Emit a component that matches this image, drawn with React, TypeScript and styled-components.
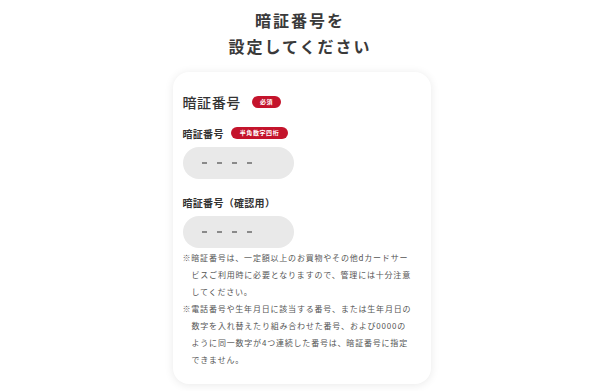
import React from "react";
import styled, { createGlobalStyle } from "styled-components";

const GlobalStyle = createGlobalStyle`
  html, body {
    margin: 0;
    padding: 0;
    background: #ffffff;
  }
  body {
    font-family: "Noto Sans CJK JP", "Noto Sans", sans-serif;
    color: #333333;
  }
`;

const Page = styled.div`
  width: 600px;
  height: 391px;
  overflow: hidden;
  display: flex;
  flex-direction: column;
  align-items: center;
  padding-top: 7px;
  box-sizing: border-box;
`;

const PageTitle = styled.h1`
  margin: 0 0 13px;
  font-size: 16px;
  line-height: 26px;
  font-weight: 700;
  letter-spacing: 2px;
  text-align: center;
  color: #3a3a3a;
`;

const Card = styled.section`
  width: 258px;
  margin-left: 3px;
  box-sizing: border-box;
  padding: 20px 14px 16px 10px;
  background: #ffffff;
  border-radius: 16px;
  box-shadow: 0 1px 10px rgba(0, 0, 0, 0.09);
`;

const HeadingRow = styled.div`
  display: flex;
  align-items: center;
  gap: 11px;
  height: 20px;
`;

const Heading = styled.h2`
  margin: 0;
  font-size: 14px;
  font-weight: 500;
  letter-spacing: 0.6px;
  color: #333333;
`;

const Badge = styled.span<{ $pad?: number }>`
  display: inline-flex;
  align-items: center;
  justify-content: center;
  height: 12px;
  padding: 0 ${(p) => p.$pad ?? 8}px;
  border-radius: 6px;
  background: #c4142c;
  color: #ffffff;
  font-size: 6px;
  font-weight: 700;
  letter-spacing: 0.6px;
  line-height: 1;
`;

const FieldLabelRow = styled.div<{ $top: number }>`
  display: flex;
  align-items: center;
  gap: 7px;
  height: 14px;
  margin-top: ${(p) => p.$top}px;
`;

const FieldLabel = styled.label`
  font-size: 10px;
  font-weight: 700;
  letter-spacing: 0.3px;
  color: #333333;
`;

const PinBox = styled.div`
  display: flex;
  align-items: center;
  gap: 10px;
  width: 111px;
  height: 32px;
  margin-top: 7px;
  padding-left: 19px;
  box-sizing: border-box;
  border-radius: 16px;
  background: #e9e9e9;
`;

const Dash = styled.span`
  width: 5px;
  height: 1.5px;
  background: #8a8a8a;
`;

const Notes = styled.div`
  margin-top: 1px;
`;

const Note = styled.p`
  margin: 0;
  padding-left: 9px;
  text-indent: -9px;
  font-size: 8px;
  line-height: 17px;
  letter-spacing: 0.8px;
  color: #555555;
`;

const PinInput = ({ label, badge, top }: { label: string; badge?: string; top: number }) => (
  <>
    <FieldLabelRow $top={top}>
      <FieldLabel>{label}</FieldLabel>
      {badge ? <Badge $pad={9}>{badge}</Badge> : null}
    </FieldLabelRow>
    <PinBox>
      {[0, 1, 2, 3].map((i) => (
        <Dash key={i} />
      ))}
    </PinBox>
  </>
);

export default function App() {
  return (
    <Page>
      <GlobalStyle />
      <PageTitle>
        暗証番号を
        <br />
        設定してください
      </PageTitle>
      <Card>
        <HeadingRow>
          <Heading>暗証番号</Heading>
          <Badge $pad={8}>必須</Badge>
        </HeadingRow>
        <PinInput label="暗証番号" badge="半角数字四桁" top={14} />
        <PinInput label="暗証番号（確認用）" top={16} />
        <Notes>
          <Note>
            ※暗証番号は、一定額以上のお買物やその他dカードサー
            <br />
            ビスご利用時に必要となりますので、管理には十分注意
            <br />
            してください。
          </Note>
          <Note>
            ※電話番号や生年月日に該当する番号、または生年月日の
            <br />
            数字を入れ替えたり組み合わせた番号、および0000の
            <br />
            ように同一数字が4つ連続した番号は、暗証番号に指定
            <br />
            できません。
          </Note>
        </Notes>
      </Card>
    </Page>
  );
}
